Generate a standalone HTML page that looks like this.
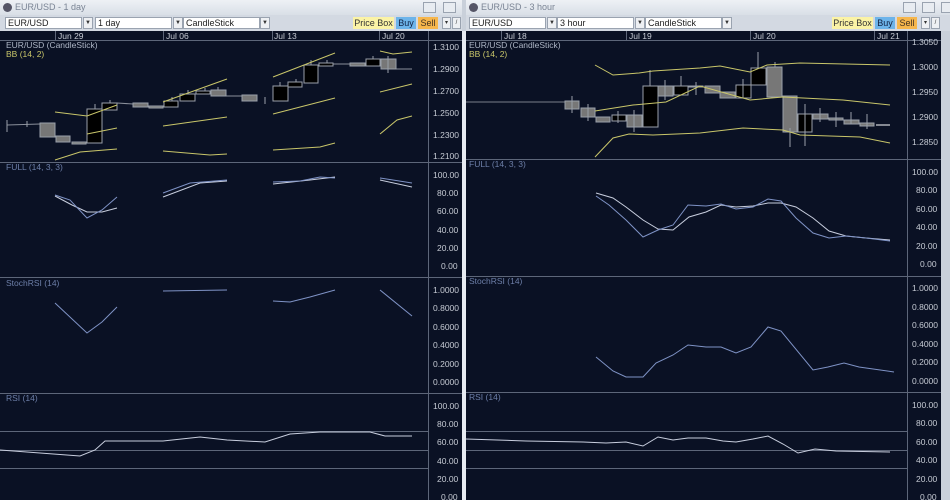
<!DOCTYPE html>
<html><head><meta charset="utf-8"><style>
*{margin:0;padding:0;box-sizing:border-box}
body{width:950px;height:500px;overflow:hidden;background:#c9d0da;font-family:"Liberation Sans",sans-serif;position:relative}
.win{position:absolute;top:0;height:500px;background:#dde3eb}
.title{position:absolute;left:0;right:0;top:0;height:15px;background:linear-gradient(#eef1f5,#d9dfe7);font-size:9px;color:#7a8494;padding:2px 0 0 15px}
.title .ic{position:absolute;left:3px;top:3px;width:9px;height:9px;border-radius:50%;background:#556}
.tb{position:absolute;left:0;right:0;top:15px;height:16px;background:#d3d9e2}
.sel{position:absolute;top:2px;height:12px;background:#fff;border:1px solid #9aa3b0;font-size:9px;color:#222;padding-left:2px;line-height:10px}
.arr{position:absolute;top:2px;height:12px;width:10px;background:#eef0f3;border:1px solid #9aa3b0;font-size:6px;text-align:center;line-height:10px;color:#333}
.btn{position:absolute;top:2px;height:12px;font-size:9px;line-height:12px;text-align:center}
.wb{position:absolute;top:2px;width:13px;height:11px;border:1px solid #9aa3b0;background:#e8ecf1}
svg{position:absolute;left:0;top:31px}
svg text{font-family:"Liberation Sans",sans-serif;font-size:8.5px}
</style></head><body>

<!-- LEFT WINDOW -->
<div class="win" style="left:0;width:462px">
<div class="title"><div class="ic"></div>EUR/USD - 1 day</div>
<div class="wb" style="left:423px"></div><div class="wb" style="left:443px"></div>
<div class="tb">
<div class="sel" style="left:5px;width:77px">EUR/USD</div><div class="arr" style="left:83px">▼</div>
<div class="sel" style="left:95px;width:77px">1 day</div><div class="arr" style="left:173px">▼</div>
<div class="sel" style="left:183px;width:77px">CandleStick</div><div class="arr" style="left:260px">▼</div>
<div class="btn" style="left:353px;width:41px;background:#fbf3a6;color:#333">Price Box</div>
<div class="btn" style="left:396px;width:20px;background:#6db4ea;color:#124">Buy</div>
<div class="btn" style="left:418px;width:20px;background:#f6b64c;color:#432">Sell</div>
<div class="arr" style="left:442px;width:9px">▾</div><div class="arr" style="left:452px;width:9px">/</div>
</div>
<svg width="462" height="469" viewBox="0 31 462 469">
<rect x="0" y="31" width="462" height="469" fill="#0a1124"/>
<g stroke="#5d6679" stroke-width="1" fill="none">
<line x1="0" y1="40.5" x2="462" y2="40.5"/>
<line x1="428.5" y1="31" x2="428.5" y2="500"/>
<line x1="0" y1="162.5" x2="462" y2="162.5"/>
<line x1="0" y1="277.5" x2="462" y2="277.5"/>
<line x1="0" y1="393.5" x2="462" y2="393.5"/>
<line x1="0" y1="431.5" x2="428" y2="431.5"/>
<line x1="0" y1="450.5" x2="428" y2="450.5"/>
<line x1="0" y1="468.5" x2="428" y2="468.5"/>
<line x1="55.5" y1="31" x2="55.5" y2="40"/><line x1="163.5" y1="31" x2="163.5" y2="40"/><line x1="272.5" y1="31" x2="272.5" y2="40"/><line x1="379.5" y1="31" x2="379.5" y2="40"/>
</g>
<g fill="#c6cbd4">
<text x="58" y="39">Jun 29</text><text x="166" y="39">Jul 06</text><text x="274" y="39">Jul 13</text><text x="382" y="39">Jul 20</text>
<text x="433" y="50">1.3100</text><text x="433" y="72">1.2900</text><text x="433" y="94">1.2700</text><text x="433" y="116">1.2500</text><text x="433" y="138">1.2300</text><text x="433" y="159">1.2100</text>
<text x="433" y="178">100.00</text><text x="437" y="196">80.00</text><text x="437" y="214">60.00</text><text x="437" y="233">40.00</text><text x="437" y="251">20.00</text><text x="441" y="269">0.00</text>
<text x="433" y="293">1.0000</text><text x="433" y="311">0.8000</text><text x="433" y="330">0.6000</text><text x="433" y="348">0.4000</text><text x="433" y="367">0.2000</text><text x="433" y="385">0.0000</text>
<text x="433" y="409">100.00</text><text x="437" y="427">80.00</text><text x="437" y="445">60.00</text><text x="437" y="464">40.00</text><text x="437" y="482">20.00</text><text x="441" y="500">0.00</text>
</g>
<text x="6" y="48" fill="#aeb6c6">EUR/USD (CandleStick)</text>
<text x="6" y="57" fill="#c9c66a">BB (14, 2)</text>
<text x="6" y="170" fill="#6d7fa8">FULL (14, 3, 3)</text>
<text x="6" y="286" fill="#6d7fa8">StochRSI (14)</text>
<text x="6" y="401" fill="#6d7fa8">RSI (14)</text>
<!-- close lines -->
<g stroke="#8a8f9a" fill="none">
<line x1="7" y1="125" x2="40" y2="124"/><line x1="117" y1="103" x2="133" y2="104"/><line x1="226" y1="96" x2="242" y2="96"/><line x1="333" y1="64" x2="350" y2="64"/><line x1="396" y1="69" x2="412" y2="69"/>
</g>
<!-- candles -->
<g stroke="#9aa0aa" stroke-width="1">
<rect x="40" y="123" width="15" height="14" fill="#777"/>
<rect x="56" y="136" width="14" height="6" fill="#777"/>
<rect x="72" y="142" width="14" height="2" fill="#777"/>
<rect x="87" y="109" width="15" height="34" fill="#000"/>
<rect x="102" y="103" width="15" height="7" fill="#000"/>
<rect x="133" y="103" width="15" height="4" fill="#777"/>
<rect x="149" y="106" width="14" height="2" fill="#777"/>
<rect x="164" y="101" width="14" height="6" fill="#000"/>
<rect x="180" y="94" width="15" height="7" fill="#000"/>
<rect x="196" y="91" width="14" height="3" fill="#000"/>
<rect x="211" y="90" width="15" height="6" fill="#777"/>
<rect x="242" y="95" width="15" height="6" fill="#777"/>
<rect x="273" y="86" width="15" height="15" fill="#000"/>
<rect x="288" y="82" width="14" height="5" fill="#000"/>
<rect x="304" y="65" width="14" height="18" fill="#000"/>
<rect x="319" y="63" width="14" height="3" fill="#000"/>
<rect x="350" y="63" width="15" height="3" fill="#777"/>
<rect x="366" y="59" width="14" height="7" fill="#000"/>
<rect x="381" y="59" width="15" height="10" fill="#777"/>
<path d="M7 120V132M27 121V127M95 104V109M110 100V103M172 97V101M188 90V94M205 88V91M218 87V90M265 97V104M280 82V86M296 79V82M311 60V65M327 60V63M373 56V59M388 56V73" fill="none"/>
</g>
<!-- BB -->
<g stroke="#c9c66a" stroke-width="1" fill="none">
<polyline points="55,112 87,116 117,105"/><polyline points="87,134 117,128"/><polyline points="55,160 80,152 117,149"/>
<polyline points="163,102 227,79"/><polyline points="163,126 227,117"/><polyline points="163,151 210,155 227,154"/>
<polyline points="273,77 335,53"/><polyline points="273,114 335,98"/><polyline points="273,150 320,147 335,143"/>
<polyline points="380,51 393,54 412,52"/><polyline points="380,92 412,84"/><polyline points="380,134 397,120 412,116"/>
</g>
<!-- indicators -->
<g stroke="#c8cede" stroke-width="1" fill="none">
<polyline points="55,196 72,205 87,212 102,212 117,208"/>
<polyline points="163,197 200,183 227,181"/>
<polyline points="273,184 310,180 335,177"/>
<polyline points="380,180 412,187"/>
<polyline points="0,450 40,453 80,456 95,450 105,441 140,441 163,441 200,437 227,440 265,442 290,434 320,432 370,432 385,436 412,436"/>
</g>
<g stroke="#7f93c6" stroke-width="1" fill="none">
<polyline points="55,195 70,200 87,218 102,210 117,197"/>
<polyline points="163,193 190,183 227,180"/>
<polyline points="273,182 300,181 320,177 335,178"/>
<polyline points="380,178 412,183"/>
<polyline points="55,303 87,333 102,322 117,307"/>
<polyline points="163,291 227,290"/>
<polyline points="273,301 290,302 310,297 335,290"/>
<polyline points="380,290 412,316"/>
</g>
</svg>
</div>
<div style="position:absolute;left:462px;top:31px;width:4px;height:469px;background:#e7ecf2"></div>

<!-- RIGHT WINDOW -->
<div class="win" style="left:466px;width:484px">
<div class="title"><div class="ic"></div>EUR/USD - 3 hour</div>
<div class="wb" style="left:437px"></div><div class="wb" style="left:456px"></div><div class="wb" style="left:475px"></div>
<div class="tb">
<div class="sel" style="left:3px;width:77px">EUR/USD</div><div class="arr" style="left:81px">▼</div>
<div class="sel" style="left:91px;width:77px">3 hour</div><div class="arr" style="left:169px">▼</div>
<div class="sel" style="left:179px;width:77px">CandleStick</div><div class="arr" style="left:256px">▼</div>
<div class="btn" style="left:366px;width:41px;background:#fbf3a6;color:#333">Price Box</div>
<div class="btn" style="left:409px;width:20px;background:#6db4ea;color:#124">Buy</div>
<div class="btn" style="left:431px;width:20px;background:#f6b64c;color:#432">Sell</div>
<div class="arr" style="left:455px;width:9px">▾</div><div class="arr" style="left:465px;width:9px">/</div>
</div>
<svg width="484" height="469" viewBox="466 31 484 469">
<rect x="466" y="31" width="475" height="469" fill="#0a1124"/>
<rect x="941" y="31" width="9" height="469" fill="#c9d0da"/>
<g stroke="#5d6679" stroke-width="1" fill="none">
<line x1="466" y1="40.5" x2="941" y2="40.5"/>
<line x1="907.5" y1="31" x2="907.5" y2="500"/>
<line x1="466" y1="159.5" x2="941" y2="159.5"/>
<line x1="466" y1="276.5" x2="941" y2="276.5"/>
<line x1="466" y1="392.5" x2="941" y2="392.5"/>
<line x1="466" y1="431.5" x2="907" y2="431.5"/>
<line x1="466" y1="450.5" x2="907" y2="450.5"/>
<line x1="466" y1="468.5" x2="907" y2="468.5"/>
<line x1="501.5" y1="31" x2="501.5" y2="40"/><line x1="626.5" y1="31" x2="626.5" y2="40"/><line x1="750.5" y1="31" x2="750.5" y2="40"/><line x1="874.5" y1="31" x2="874.5" y2="40"/>
</g>
<g fill="#c6cbd4">
<text x="504" y="39">Jul 18</text><text x="629" y="39">Jul 19</text><text x="753" y="39">Jul 20</text><text x="877" y="39">Jul 21</text>
<text x="912" y="45">1.3050</text><text x="912" y="70">1.3000</text><text x="912" y="95">1.2950</text><text x="912" y="120">1.2900</text><text x="912" y="145">1.2850</text>
<text x="912" y="175">100.00</text><text x="916" y="193">80.00</text><text x="916" y="212">60.00</text><text x="916" y="230">40.00</text><text x="916" y="249">20.00</text><text x="920" y="267">0.00</text>
<text x="912" y="291">1.0000</text><text x="912" y="310">0.8000</text><text x="912" y="328">0.6000</text><text x="912" y="347">0.4000</text><text x="912" y="365">0.2000</text><text x="912" y="384">0.0000</text>
<text x="912" y="408">100.00</text><text x="916" y="426">80.00</text><text x="916" y="445">60.00</text><text x="916" y="463">40.00</text><text x="916" y="482">20.00</text><text x="920" y="500">0.00</text>
</g>
<text x="469" y="48" fill="#aeb6c6">EUR/USD (CandleStick)</text>
<text x="469" y="57" fill="#c9c66a">BB (14, 2)</text>
<text x="469" y="167" fill="#6d7fa8">FULL (14, 3, 3)</text>
<text x="469" y="284" fill="#6d7fa8">StochRSI (14)</text>
<text x="469" y="400" fill="#6d7fa8">RSI (14)</text>
<line x1="466" y1="102" x2="565" y2="102" stroke="#7a7f8a"/>
<line x1="876" y1="125" x2="890" y2="125" stroke="#fff"/>
<g stroke="#9aa0aa" stroke-width="1">
<rect x="565" y="101" width="14" height="8" fill="#777"/>
<rect x="581" y="108" width="14" height="9" fill="#777"/>
<rect x="596" y="117" width="14" height="5" fill="#777"/>
<rect x="612" y="115" width="14" height="6" fill="#000"/>
<rect x="627" y="115" width="15" height="12" fill="#777"/>
<rect x="643" y="86" width="15" height="41" fill="#000"/>
<rect x="658" y="86" width="15" height="10" fill="#777"/>
<rect x="674" y="86" width="14" height="9" fill="#000"/>
<rect x="689" y="86" width="14" height="1" fill="#777"/>
<rect x="705" y="86" width="15" height="7" fill="#777"/>
<rect x="720" y="92" width="15" height="6" fill="#777"/>
<rect x="736" y="85" width="15" height="13" fill="#000"/>
<rect x="751" y="68" width="15" height="17" fill="#000"/>
<rect x="767" y="67" width="15" height="30" fill="#777"/>
<rect x="783" y="96" width="14" height="36" fill="#777"/>
<rect x="798" y="114" width="14" height="18" fill="#000"/>
<rect x="813" y="114" width="15" height="5" fill="#777"/>
<rect x="829" y="118" width="14" height="2" fill="#777"/>
<rect x="844" y="120" width="15" height="4" fill="#777"/>
<rect x="860" y="123" width="14" height="3" fill="#777"/>
<path d="M572 96V113M588 104V121M618 111V123M634 110V132M650 70V86M665 80V100M681 76V86M696 82V95M743 79V98M758 52V68M775 62V67M790 128V147M805 104V146M820 108V122M836 112V127M851 112V124M867 114V129" fill="none"/>
</g>
<g stroke="#c9c66a" stroke-width="1" fill="none">
<polyline points="595,65 613,75 639,73 653,71 700,68 720,66 750,72 767,65 800,63 890,65"/>
<polyline points="595,111 633,105 666,102 700,86 750,100 783,97 843,100 890,105"/>
<polyline points="595,157 613,138 629,134 653,135 700,133 743,128 783,130 800,135 860,137 890,143"/>
</g>
<g stroke="#c8cede" stroke-width="1" fill="none">
<polyline points="596,193 613,198 626,207 643,220 658,229 673,230 689,217 706,212 721,205 736,207 753,206 768,203 781,203 796,207 813,218 829,231 846,236 866,238 890,240"/>
<polyline points="466,439 526,441 583,442 606,443 626,442 643,446 658,437 673,440 688,438 706,438 723,441 736,442 753,439 768,436 783,444 798,453 815,449 836,451 890,452"/>
</g>
<g stroke="#7f93c6" stroke-width="1" fill="none">
<polyline points="596,196 609,205 626,220 643,237 658,230 673,225 688,205 706,206 721,204 736,209 753,207 768,199 781,201 796,218 813,233 829,238 846,236 866,238 890,241"/>
<polyline points="596,357 613,371 626,377 643,377 656,363 673,355 688,345 706,347 721,347 736,353 751,347 768,327 781,331 813,370 828,367 844,363 859,367 894,372"/>
</g>
</svg>
</div>
</body></html>
